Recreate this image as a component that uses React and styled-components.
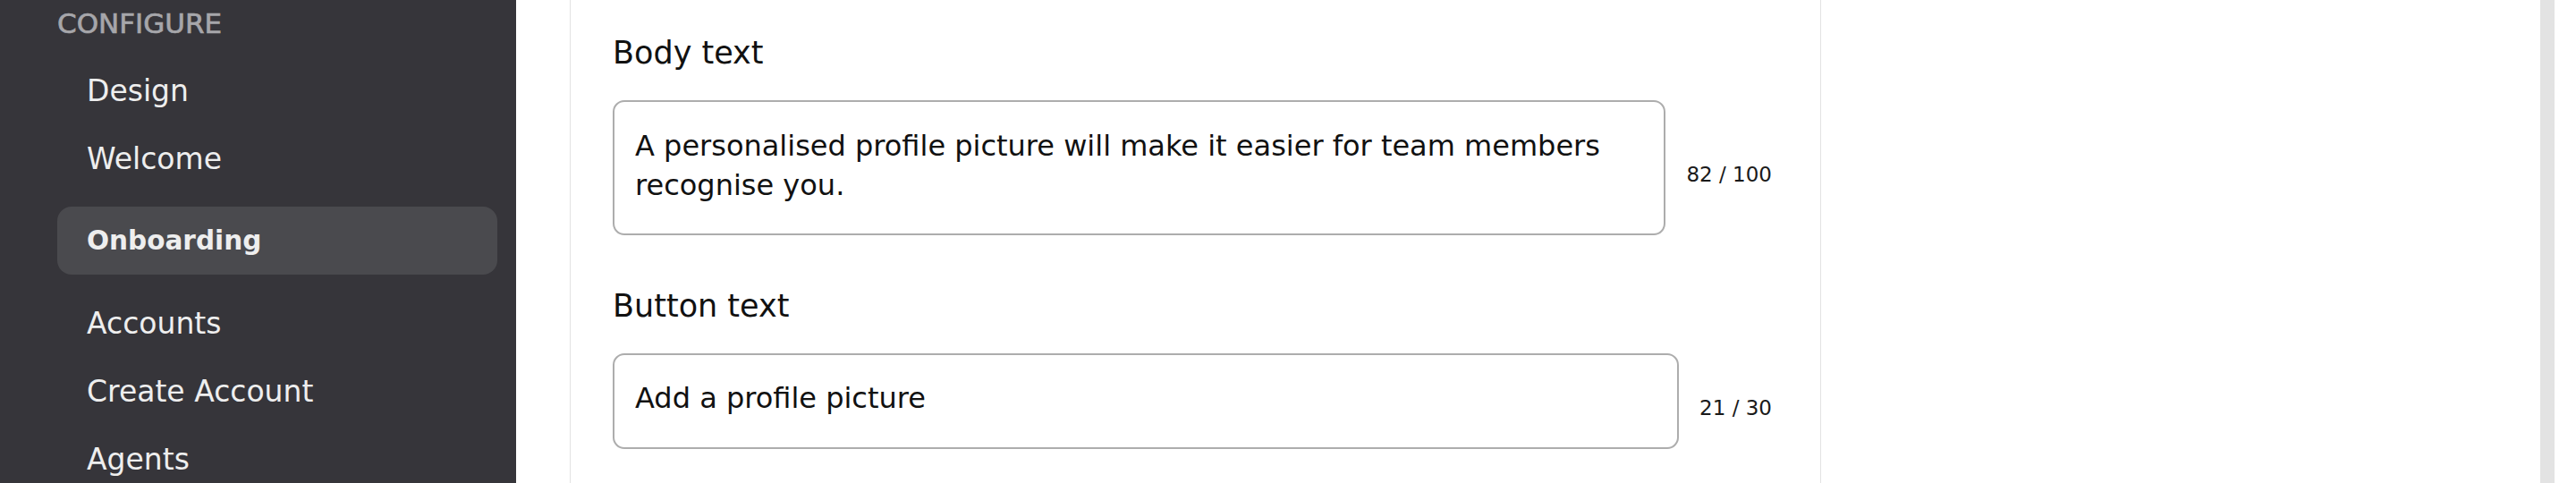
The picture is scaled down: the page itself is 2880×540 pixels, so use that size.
import React from 'react'
import styled, { createGlobalStyle, css } from 'styled-components'

const GlobalStyle = createGlobalStyle`
  html, body {
    margin: 0;
    padding: 0;
    background: #fff;
  }
  body {
    font-family: "DejaVu Sans", "Liberation Sans", sans-serif;
    color: #111;
  }
  * {
    box-sizing: border-box;
  }
`

const navItems = [
  { id: 1, label: 'Design' },
  { id: 2, label: 'Welcome' },
  { id: 3, label: 'Onboarding', active: true },
  { id: 4, label: 'Accounts' },
  { id: 5, label: 'Create Account' },
  { id: 6, label: 'Agents' },
]

const App = () => {
  return (
    <>
      <GlobalStyle />
      <Page>
        <Sidebar>
          <SectionTitle>Configure</SectionTitle>
          <NavList>
            {navItems.map((item) => (
              <NavItem key={item.id} href="#" $active={item.active}>
                {item.label}
              </NavItem>
            ))}
          </NavList>
        </Sidebar>
        <Workspace>
          <Editor>
            <Field>
              <Label htmlFor="body-text">Body text</Label>
              <Row>
                <TextArea
                  id="body-text"
                  defaultValue="A personalised profile picture will make it easier for team members recognise you."
                />
                <Counter>82 / 100</Counter>
              </Row>
            </Field>
            <Field>
              <Label htmlFor="button-text">Button text</Label>
              <Row>
                <TextInput id="button-text" defaultValue="Add a profile picture" />
                <Counter>21 / 30</Counter>
              </Row>
            </Field>
          </Editor>
          <Preview />
          <ScrollTrack />
        </Workspace>
      </Page>
    </>
  )
}

const Page = styled.div`
  display: flex;
  height: 540px;
  overflow: hidden;
`

const Sidebar = styled.aside`
  width: 577px;
  flex-shrink: 0;
  background: #36353a;
  padding: 8px 21px 0 64px;
`

const SectionTitle = styled.h6`
  margin: 0 0 19px;
  font-size: 31px;
  line-height: 36px;
  font-weight: 400;
  text-transform: uppercase;
  color: #a6a6aa;
  -webkit-text-stroke: 0.7px #a6a6aa;
`

const NavList = styled.nav`
  display: flex;
  flex-direction: column;
`

const NavItem = styled.a`
  display: flex;
  align-items: center;
  height: 76px;
  padding-left: 33px;
  border-radius: 16px;
  font-size: 33px;
  color: #eeeeee;
  text-decoration: none;
  ${(p) =>
    p.$active &&
    css`
      margin: 16px 0;
      background: #4a4a4e;
      font-size: 29.5px;
      font-weight: 700;
    `}
`

const Workspace = styled.main`
  flex: 1;
  display: flex;
  padding-left: 60px;
`

const Editor = styled.section`
  width: 1399px;
  flex-shrink: 0;
  border-left: 1px solid #e3e3e3;
  border-right: 1px solid #e3e3e3;
  padding: 35px 54px 0 47px;
  display: flex;
  flex-direction: column;
  gap: 55px;
`

const Field = styled.div`
  display: flex;
  flex-direction: column;
`

const Label = styled.label`
  font-size: 35px;
  line-height: 48px;
  margin-bottom: 29px;
  color: #111;
`

const Row = styled.div`
  display: flex;
  align-items: center;
  gap: 23px;
`

const fieldBase = css`
  flex: 1;
  min-width: 0;
  border: 2px solid #adadad;
  border-radius: 13px;
  font-family: inherit;
  font-size: 32px;
  line-height: 44px;
  color: #111;
  background: #fff;
  outline: none;
`

const TextArea = styled.textarea`
  ${fieldBase}
  height: 151px;
  padding: 27px 23px;
  resize: none;
  overflow: hidden;
`

const TextInput = styled.input`
  ${fieldBase}
  height: 107px;
  padding: 24px 23px 32px;
`

const Counter = styled.span`
  padding-top: 14px;
  font-size: 23px;
  font-weight: 400;
  color: #1a1a1a;
  white-space: nowrap;
`

const Preview = styled.div`
  flex: 1;
`

const ScrollTrack = styled.div`
  width: 16px;
  margin-right: 24px;
  background: #e3e3e3;
`

export default App
